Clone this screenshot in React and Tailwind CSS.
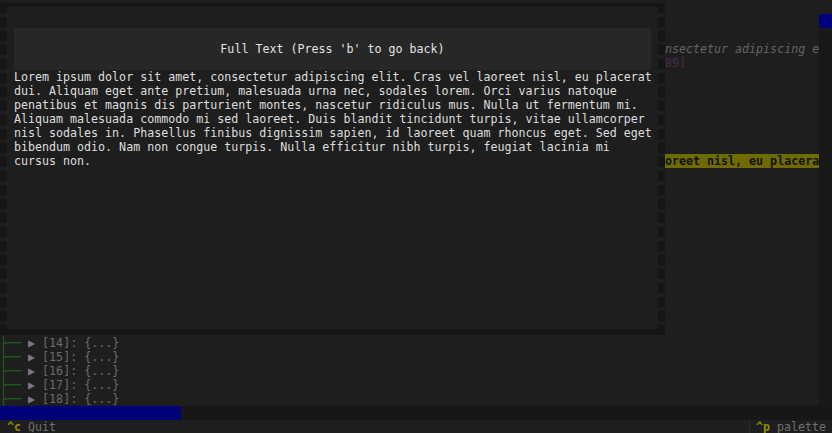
const mono = { fontFamily: '"DejaVu Sans Mono", "Liberation Mono", monospace' };

const fullText = [
  'Lorem ipsum dolor sit amet, consectetur adipiscing elit. Cras vel laoreet nisl, eu placerat',
  'dui. Aliquam eget ante pretium, malesuada urna nec, sodales lorem. Orci varius natoque',
  'penatibus et magnis dis parturient montes, nascetur ridiculus mus. Nulla ut fermentum mi.',
  'Aliquam malesuada commodo mi sed laoreet. Duis blandit tincidunt turpis, vitae ullamcorper',
  'nisl sodales in. Phasellus finibus dignissim sapien, id laoreet quam rhoncus eget. Sed eget',
  'bibendum odio. Nam non congue turpis. Nulla efficitur nibh turpis, feugiat lacinia mi',
  'cursus non.',
];

const treeRows = [14, 15, 16, 17, 18];

function BorderColumn() {
  return (
    <div className="w-[7px] shrink-0 flex flex-col gap-[4px] overflow-hidden">
      <div className="h-[6px] shrink-0 bg-[#151515]" />
      {Array.from({ length: 23 }).map((_, i) => (
        <div key={i} className="h-[10px] shrink-0 bg-[#151515]" />
      ))}
    </div>
  );
}

function Row({ children, className = '' }) {
  return <div className={`h-[14px] shrink-0 flex items-center whitespace-pre ${className}`}>{children}</div>;
}

export default function App() {
  return (
    <div
      className="relative w-[832px] h-[433px] overflow-hidden bg-[#1e1e1e] text-[11.65px] leading-[14px] flex flex-col"
      style={mono}
    >
      {/* background app */}
      <Row />
      <div className="flex h-[392px] shrink-0">
        <div className="flex-1 flex flex-col">
          <Row />
          <Row />
          <Row className="pl-[665px] italic text-[#656565]">nsectetur adipiscing e</Row>
          <Row className="pl-[665px] text-[#4c2a4c]">89]</Row>
          {Array.from({ length: 6 }).map((_, i) => (
            <Row key={i} />
          ))}
          <Row className="pl-[665px] bg-[#6f6b00] text-[#111111] font-bold">oreet nisl, eu placera</Row>
          {Array.from({ length: 12 }).map((_, i) => (
            <Row key={i} />
          ))}
          {treeRows.map((n) => (
            <Row key={n}>
              <span className="text-[#1f6b1f]">├── </span>
              <span className="text-[#7a7a7a]">▶ </span>
              <span className="text-[#6c6c6c]">[{n}]: {'{...}'}</span>
            </Row>
          ))}
        </div>
        <div className="w-[13px] bg-[#181818]">
          <div className="h-[14px] bg-[#000080]" />
        </div>
      </div>
      <div className="h-[14px] shrink-0 bg-[#171717] flex">
        <div className="w-[181px] bg-[#000078]" />
      </div>
      <div className="h-[14px] shrink-0 flex items-center justify-between">
        <div className="pl-[7px] whitespace-pre">
          <span className="text-[#8f8c00] font-bold">^c</span>
          <span className="text-[#707070]"> Quit</span>
        </div>
        <div className="h-full flex items-center border-l border-[#2a2a2a] pl-[6px] pr-[6px] whitespace-pre">
          <span className="text-[#8f8c00] font-bold">^p</span>
          <span className="text-[#707070]"> palette</span>
        </div>
      </div>

      {/* modal screen */}
      <div className="absolute left-0 top-[3px] w-[665px] h-[332px] bg-[#1e1e1e] flex flex-col">
        <div className="h-[4px] bg-[#151515]" />
        <div className="flex-1 flex overflow-hidden">
          <BorderColumn />
          <div className="flex-1 min-w-0 px-[7px] pt-[21px]">
            <div className="h-[42px] bg-[#272727] flex items-center justify-center text-[#e2e2e2] whitespace-pre">
              Full Text (Press 'b' to go back)
            </div>
            <div className="text-[#dedede]">
              {fullText.map((line, i) => (
                <div key={i} className="h-[14px] whitespace-pre">
                  {line}
                </div>
              ))}
            </div>
          </div>
          <BorderColumn />
        </div>
        <div className="h-[6px] bg-[#151515]" />
      </div>
    </div>
  );
}
